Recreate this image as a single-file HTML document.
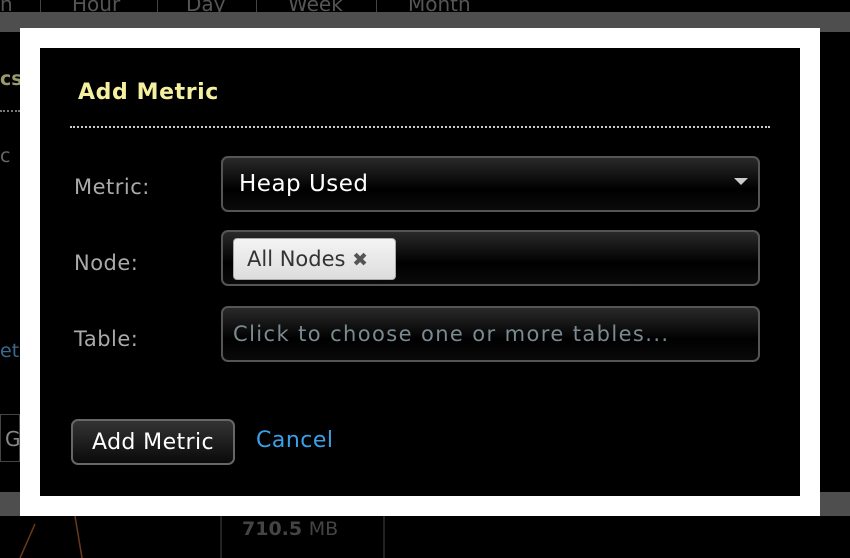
<!DOCTYPE html>
<html><head><style>
*{margin:0;padding:0;box-sizing:border-box}
body{width:850px;height:558px;background:#000;position:relative;overflow:hidden;font-family:"DejaVu Sans","Liberation Sans",sans-serif;color:#ddd}
.abs{position:absolute}
.tabs{top:-8px;left:0;height:22px;color:#555;font-size:20px}
.band{left:0;width:850px;height:20px;background:#4e4e4e}
.frame{left:20px;top:28px;width:800px;height:488px;background:#fff}
.modal{left:40px;top:48px;width:760px;height:448px;background:#000}
h1{position:absolute;left:38px;top:32px;font-size:22px;letter-spacing:0.6px;color:#f5f0a0;font-weight:bold}
.sep{position:absolute;left:30px;top:78px;width:700px;border-top:2px dotted #ccc}
.lbl{position:absolute;left:34px;font-size:21px;letter-spacing:0.5px;color:#aaa}
.field{position:absolute;left:181px;width:539px;height:56px;border:2px solid #555;border-radius:7px;background:linear-gradient(#2a2a2a,#000 60%,#0a0a0a)}
.btn{position:absolute;left:31px;top:371px;width:164px;height:46px;border:2px solid #666;border-radius:7px;background:linear-gradient(#333,#0a0a0a);color:#fff;font-size:22px;letter-spacing:0.4px;text-align:center;line-height:44px;white-space:nowrap}
</style></head><body>
<div class="abs tabs"><span style="position:absolute;left:0">n</span><span style="position:absolute;left:72px">Hour</span><span style="position:absolute;left:186px">Day</span><span style="position:absolute;left:288px">Week</span><span style="position:absolute;left:408px">Month</span></div>
<div class="abs" style="left:40px;top:0;width:1px;height:12px;background:#444"></div>
<div class="abs" style="left:157px;top:0;width:1px;height:12px;background:#444"></div>
<div class="abs" style="left:256px;top:0;width:1px;height:12px;background:#444"></div>
<div class="abs" style="left:376px;top:0;width:1px;height:12px;background:#444"></div>
<div class="abs band" style="top:12px"></div>
<div class="abs band" style="top:492px;height:24px"></div>
<div class="abs" style="left:0;top:68px;color:#9a9a70;font-size:19px;font-weight:bold">cs</div>
<div class="abs" style="left:0;top:110px;width:20px;border-top:2px dotted #777"></div>
<div class="abs" style="left:0;top:145px;color:#666;font-size:19px">c</div>
<div class="abs" style="left:0;top:340px;color:#3a6a90;font-size:19px">et</div>
<div class="abs" style="left:0;top:414px;width:20px;height:48px;border:1px solid #444;color:#888;font-size:20px;padding:12px 4px">G</div>
<div class="abs" style="left:242px;top:518px;color:#444;font-size:19px;font-weight:bold">710.5 <span style="font-weight:normal">MB</span></div>
<div class="abs" style="left:220px;top:516px;width:2px;height:42px;background:#222"></div>
<div class="abs" style="left:383px;top:516px;width:2px;height:42px;background:#222"></div>
<svg class="abs" style="left:0;top:516px" width="100" height="42"><path d="M20 42 L35 8 M75 0 L82 42" stroke="#6a3a1a" stroke-width="1.5" fill="none"/></svg>
<div class="abs frame"></div>
<div class="abs modal">
<h1>Add Metric</h1>
<div class="sep"></div>
<div class="lbl" style="top:127px">Metric:</div>
<div class="lbl" style="top:203px">Node:</div>
<div class="lbl" style="top:279px">Table:</div>
<div class="field" style="top:108px"><span style="position:absolute;left:16px;top:13px;font-size:23px;letter-spacing:0.5px;color:#fff">Heap Used</span><span style="position:absolute;right:10px;top:20px;width:0;height:0;border-left:7px solid transparent;border-right:7px solid transparent;border-top:7px solid #ccc"></span></div>
<div class="field" style="top:182px"><span style="position:absolute;left:10px;top:6px;width:163px;height:42px;background:linear-gradient(#f4f4f4,#ddd);border:1px solid #aaa;border-radius:4px;color:#333;font-size:21px;line-height:40px;padding-left:13px;white-space:nowrap">All Nodes <span style="color:#555;font-weight:bold;font-size:19px">✖</span></span></div>
<div class="field" style="top:258px"><span style="position:absolute;left:10px;top:14px;font-size:21px;letter-spacing:1.4px;color:#7a8a90;white-space:nowrap">Click to choose one or more tables...</span></div>
<div class="btn">Add Metric</div>
<div class="abs" style="left:216px;top:380px;font-size:22px;letter-spacing:0.5px;color:#3aa0e8">Cancel</div>
</div>
</body></html>
